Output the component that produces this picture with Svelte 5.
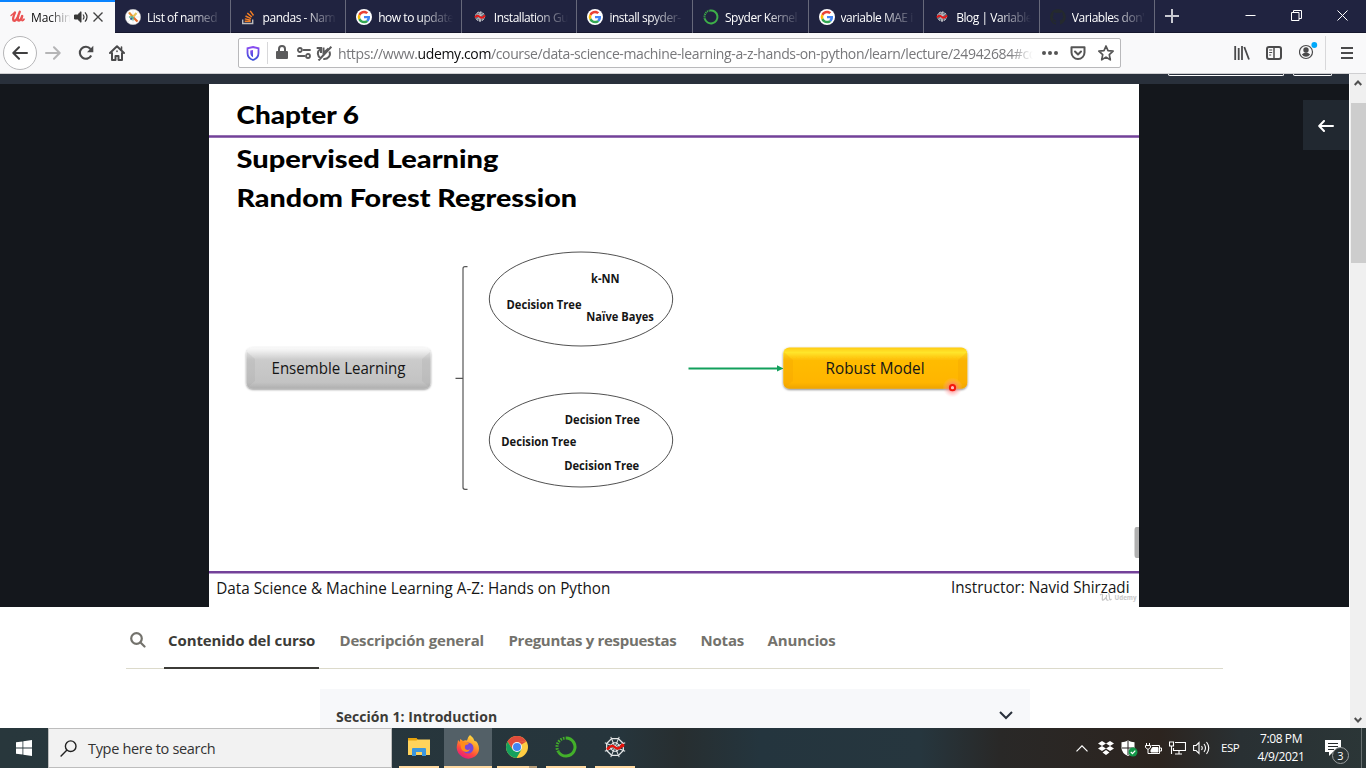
<script>
  const tabs = [
    { icon: 'wheel', text: 'List of named' },
    { icon: 'stack', text: 'pandas - Nam' },
    { icon: 'google', text: 'how to update' },
    { icon: 'spyder', text: 'Installation Gu' },
    { icon: 'google', text: 'install spyder-' },
    { icon: 'anaconda', text: 'Spyder Kernel' },
    { icon: 'google', text: 'variable MAE i' },
    { icon: 'spyder', text: 'Blog | Variable' },
    { icon: 'github', text: "Variables don'" }
  ];
  const labels = [
    { t: 'k-NN', x: 591, y: 283, w: 28.5 },
    { t: 'Decision Tree', x: 506.5, y: 309, w: 75 },
    { t: 'Naïve Bayes', x: 586.3, y: 321, w: 67.5 },
    { t: 'Decision Tree', x: 564.8, y: 424, w: 75 },
    { t: 'Decision Tree', x: 501.3, y: 446, w: 75 },
    { t: 'Decision Tree', x: 564.2, y: 470, w: 75 }
  ];
  const spokes = [0, 45, 90, 135, 180, 225, 270, 315];
</script>

{#snippet google()}
  <svg width="16" height="16" viewBox="0 0 48 48">
    <circle cx="24" cy="24" r="24" fill="#fff" />
    <g transform="translate(5 5) scale(.79)">
      <path fill="#ea4335" d="M24 9.500c3.500 0 6.700 1.200 9.200 3.600l6.900-6.900C35.900 2.400 30.500 0 24 0 14.600 0 6.500 5.400 2.600 13.200l8 6.200C12.400 13.700 17.700 9.500 24 9.500z" />
      <path fill="#4285f4" d="M47 24.500c0-1.600-.2-3.100-.4-4.500H24v9h12.900c-.6 3-2.300 5.500-4.800 7.200l7.700 6C44.400 38 47 31.900 47 24.500z" />
      <path fill="#fbbc05" d="M10.500 28.600A14.500 14.500 0 0 1 10.500 19.400l-8-6.200a24 24 0 0 0 0 21.600z" />
      <path fill="#34a853" d="M24 48c6.500 0 11.900-2.100 15.900-5.800l-7.700-6c-2.200 1.500-4.900 2.300-8.200 2.300-6.300 0-11.600-4.200-13.500-9.900l-8 6.200C6.500 42.600 14.600 48 24 48z" />
    </g>
  </svg>
{/snippet}

{#snippet web(size)}
  <svg width={size} height={size} viewBox="0 0 24 24" fill="none">
    <g stroke="#e4e6e7" stroke-width="1" transform="rotate(22.500 12 12)">
      {#each spokes as a}
        <path d="M12 12V1" transform="rotate({a} 12 12)" />
      {/each}
      <path d="M12 3l6.400 2.600L21 12l-2.600 6.400L12 21l-6.400-2.600L3 12l2.600-6.400z" stroke-width="1.300" />
      <path d="M12 7.500l3.200 1.300 1.300 3.200-1.300 3.200-3.200 1.300-3.200-1.300L7.500 12l1.300-3.200z" />
    </g>
    <path d="M5 13.500c2-2.600 4-3.500 6.500-1.500s4.500 2.500 7.500-1.500" stroke="#e3120b" stroke-width="2.300" />
    <circle cx="5" cy="13.500" r="1.500" fill="#e3120b" /><circle cx="19.500" cy="10.500" r="1.900" fill="#e3120b" />
  </svg>
{/snippet}

{#snippet tabIcon(name)}
  {#if name === 'google'}
    {@render google()}
  {:else if name === 'wheel'}
    <svg width="16" height="16" viewBox="0 0 16 16" fill="none">
      <circle cx="8" cy="8" r="7.700" fill="#fff" stroke="#bbb" stroke-width=".5" />
      <path d="M8 1v14M1 8h14M3 3l10 10M3 13L13 3" stroke="#d5d9dc" stroke-width=".5" />
      <path d="M8 8L4 3.500" stroke="#e99030" stroke-width="2.200" />
      <path d="M8 8l4.500 4.500" stroke="#e56b2c" stroke-width="2.200" />
      <path d="M8 8l3.500-4" stroke="#e8c35a" stroke-width="2.200" />
      <path d="M8 8l-2.500 2.500" stroke="#355f9b" stroke-width="2" />
      <path d="M8 8H4M8 8v3.500" stroke="#63b894" stroke-width="1.400" />
    </svg>
  {:else if name === 'stack'}
    <svg width="16" height="16" viewBox="0 0 16 16" fill="none" stroke-width="1.400">
      <path d="M1.700 10.500v4h10v-4" stroke="#bcbbbb" />
      <path d="M3.700 12.300h6M3.800 9.900l5.900 1.200M4.500 7l5.500 2.600M6.300 4.100l4.500 3.900M9.200 1.800l3.300 4.700" stroke="#f47f24" />
    </svg>
  {:else if name === 'spyder'}
    <svg width="16" height="16" viewBox="0 0 16 16" fill="none">
      <circle cx="8" cy="7.500" r="4.600" fill="#696e7b" stroke="#c9cbd1" stroke-dasharray="2 1" />
      <path d="M8 3v9.500M5 4.500l6 6M11 4.500l-6 6" stroke="#dfe0e3" />
      <path d="M3 8.500c2-2.800 3.500-1.700 5-.5s3 1 5-1.600" stroke="#e51616" stroke-width="2" />
    </svg>
  {:else if name === 'anaconda'}
    <svg width="16" height="16" viewBox="0 0 16 16" fill="none" stroke="#3eb049">
      <path d="M7 1.500a6.500 6.500 0 1 1-5.300 8.100" stroke-width="2" />
      <path d="M1.700 9.600A6.500 6.500 0 0 1 7 1.500" stroke-width="2" stroke-dasharray="1.100 .8" />
    </svg>
  {:else}
    <svg width="16" height="16" viewBox="0 0 16 16">
      <path fill="#24292e" d="M8 0C3.600 0 0 3.600 0 8c0 3.500 2.300 6.500 5.500 7.600.4.100.5-.2.500-.4v-1.400c-2.200.5-2.700-1-2.700-1-.4-.9-.9-1.200-.9-1.200-.7-.5.100-.5.100-.5.800.1 1.200.8 1.200.8.700 1.300 1.900.9 2.300.7.100-.5.300-.9.500-1.100-1.800-.2-3.600-.9-3.600-4 0-.9.300-1.600.8-2.100-.1-.2-.4-1 .1-2.100 0 0 .7-.2 2.200.8a7.600 7.600 0 0 1 4 0c1.500-1 2.200-.8 2.200-.8.500 1.100.2 1.900.1 2.100.5.500.8 1.200.8 2.100 0 3.100-1.900 3.700-3.600 3.900.3.300.5.800.5 1.500v2.200c0 .2.100.5.600.4A8 8 0 0 0 8 0z" />
    </svg>
  {/if}
{/snippet}

<div class="screen">
  <header class="tabs">
    <div class="tab active">
      <svg width="15" height="16" viewBox="0 0 15 16" fill="none" stroke="#ea5252" stroke-linecap="round" stroke-linejoin="round">
        <path d="M1 6.500L4 4" stroke-width="1.300" />
        <path d="M5 3.500Q2.300 9.800 3.500 11.500q2.200 1.200 4.600-4" stroke-width="2.300" />
        <path d="M9.800 2.800Q6.800 9.500 8.300 11.500q2 .7 3.900-4.500" stroke-width="2.300" />
        <path d="M12.300 7Q11.200 10.800 12 11.500q1 .3 2-1.300" stroke-width="1.700" />
      </svg>
      <span class="title">Machin</span>
      <svg class="speaker" width="14" height="12" viewBox="0 0 14 12" fill="none" stroke="#383838">
        <path d="M.5 4h3L7 .7v10.600L3.500 8h-3z" fill="#383838" />
        <path d="M9 3.500q2 2.500 0 5M11 1.300q4 4.700 0 9.400" stroke-width="1.200" />
      </svg>
      <svg width="10" height="10" viewBox="0 0 10 10" stroke="#444" stroke-width="1.400"><path d="M.5.5l9 9M9.500.5l-9 9" /></svg>
    </div>
    {#each tabs as tab}
      <div class="tab">
        {@render tabIcon(tab.icon)}
        <span class="title">{tab.text}</span>
      </div>
    {/each}
    <svg class="plus" width="14" height="14" viewBox="0 0 14 14" stroke="#c9cad2" stroke-width="2"><path d="M7 0v14M0 7h14" /></svg>
    <div class="window">
      <svg width="11" height="11" viewBox="0 0 11 11" stroke="#fff"><path d="M.5 5.500h10" /></svg>
      <svg width="11" height="11" viewBox="0 0 11 11" fill="none" stroke="#fff"><path d="M.5 2.500h7.500v8H.5zM2.500 2.500v-2h8v8H8" /></svg>
      <svg width="11" height="11" viewBox="0 0 11 11" stroke="#fff"><path d="M.5.5l10 10M10.500.5l-10 10" /></svg>
    </div>
  </header>

  <nav class="toolbar">
    <div class="back">
      <svg width="16" height="14" viewBox="0 0 16 14" fill="none" stroke="#3f3f40" stroke-width="2" stroke-linecap="round" stroke-linejoin="round"><path d="M15 7H1.500M7 1.300L1.300 7 7 12.700" /></svg>
    </div>
    <svg class="fwd" width="16" height="14" viewBox="0 0 16 14" fill="none" stroke="#b5b5b6" stroke-width="2" stroke-linecap="round" stroke-linejoin="round"><path d="M1 7h13.500M9 1.300L14.700 7 9 12.700" /></svg>
    <svg class="reload" width="16" height="16" viewBox="0 0 16 16" fill="none" stroke="#4a4a4b" stroke-width="2.100">
      <path d="M13.200 10.500A6 6 0 1 1 12.500 4" /><path d="M15.300.8v6.400H9z" fill="#4a4a4b" stroke="none" />
    </svg>
    <svg width="16" height="16" viewBox="0 0 16 16" fill="none" stroke="#4a4a4b" stroke-width="2" stroke-linejoin="round" stroke-linecap="round">
      <path d="M1 8l7-6.800L15 8M3 8v7h3.500v-4h3v4H13V8" /><path d="M12.500 2v2.500M8 6v.5" stroke-width="1.600" />
    </svg>
    <div class="url">
      <svg width="14" height="15" viewBox="0 0 14 15" fill="none">
        <defs><linearGradient id="shield" x2="0" y2="1"><stop stop-color="#8a4df0" /><stop offset="1" stop-color="#3a50d8" /></linearGradient></defs>
        <path d="M7 1l5.500 1.300V7c0 3.500-2 5.800-5.500 7-3.500-1.200-5.500-3.500-5.500-7V2.300z" stroke="url(#shield)" stroke-width="1.800" />
        <path d="M7 4l-2.700.5V7c0 2 1 3.300 2.700 4.200z" fill="url(#shield)" />
      </svg>
      <i class="sep"></i>
      <svg class="lock" width="12" height="14" viewBox="0 0 12 14"><rect y="6" width="12" height="8" rx="1" fill="#5b5b5c" /><path d="M3 7V4a3 3 0 0 1 6 0v3" fill="none" stroke="#5b5b5c" stroke-width="2" /></svg>
      <svg class="perm" width="14" height="12" viewBox="0 0 14 12" fill="none" stroke="#5b5b5c" stroke-width="1.800"><circle cx="2.900" cy="3" r="2" /><path d="M6.500 3H13M1 9h6.500" stroke-linecap="round" /><circle cx="11" cy="9" r="2" /></svg>
      <svg width="16" height="15" viewBox="0 0 16 15" fill="none" stroke="#5b5b5c" stroke-width="2">
        <path d="M.7 2h4.300v5M4.500 3C.8 5.500 1 10 5 12.800M7.500 1.500v5.500l5-4.500M13.300 5.500c2 3.800-1.300 8-6 7.500M2.500 14.500L15.300.7" />
      </svg>
      <span class="address">https://www.<b>udemy.com</b>/course/data-science-machine-learning-a-z-hands-on-python/learn/lecture/24942684#co</span>
      <svg class="dots" width="16" height="4" viewBox="0 0 16 4" fill="#555"><circle cx="2" cy="2" r="2" /><circle cx="8" cy="2" r="2" /><circle cx="14" cy="2" r="2" /></svg>
      <svg width="16" height="15" viewBox="0 0 16 15" fill="none" stroke="#555" stroke-width="2" stroke-linecap="round" stroke-linejoin="round"><path d="M1.500 1.200h13V6.500a6.500 6.500 0 0 1-13 0zM5 5.500l3 3 3-3" /></svg>
      <svg width="16" height="16" viewBox="0 0 16 16" fill="none" stroke="#555" stroke-width="1.700" stroke-linejoin="round"><path d="M8 1l2 4.600 5.100.5-3.800 3.500 1 5.200L8 12.100l-4.300 2.700 1-5.200L.9 6.100 6 5.600z" /></svg>
    </div>
    <div class="tools">
      <svg width="16" height="14" viewBox="0 0 16 14" fill="none" stroke="#4a4a4b" stroke-width="1.800"><path d="M1.200 0v14M4.700 2v12M8 0v14M10.300 1l4.700 12.500" /></svg>
      <svg width="16" height="14" viewBox="0 0 16 14" fill="none" stroke="#4a4a4b"><rect x="1" y="1" width="14" height="12" rx="2" stroke-width="2" /><path d="M8 1v12" stroke-width="1.500" /><path d="M3.200 4h3M3.200 6.500h3M3.200 9h2" /></svg>
      <svg class="account" width="19" height="20" viewBox="0 0 19 20" fill="none"><circle cx="7" cy="12" r="6.500" stroke="#4a4a4b" stroke-width="1.200" /><circle cx="7" cy="10" r="2.700" fill="#4a4a4b" /><path d="M2.800 14.500q4.200-4 8.400 0-1.800 2.200-4.200 2.200t-4.200-2.200" fill="#4a4a4b" /><circle cx="15.500" cy="5" r="3.500" fill="#f9f9fa" /><circle cx="15.300" cy="5" r="2.900" fill="#00a8fa" /></svg>
      <i class="sep tall"></i>
      <svg width="12" height="12" viewBox="0 0 12 12" stroke="#4a4a4b" stroke-width="2"><path d="M0 1h12M0 6h12M0 11h12" /></svg>
    </div>
  </nav>

  <main class="body">
    <div class="page">
      <div class="coursebar"><i class="pill long"></i><i class="pill short"></i></div>
      <section class="video">
        <svg class="slide" width="930" height="523" viewBox="209 84 930 523">
          <defs>
            <linearGradient id="grey" x2="0" y2="1"><stop stop-color="#fafafa" /><stop offset=".08" stop-color="#f0f0f0" /><stop offset=".3" stop-color="#cbcbcb" /><stop offset=".85" stop-color="#c3c3c3" /><stop offset="1" stop-color="#b0b0b0" /></linearGradient>
            <linearGradient id="gold" x2="0" y2="1"><stop stop-color="#ffcb12" /><stop offset=".12" stop-color="#ffe52b" /><stop offset=".3" stop-color="#ffbc06" /><stop offset=".85" stop-color="#ffb500" /><stop offset="1" stop-color="#eea400" /></linearGradient>
            <radialGradient id="glow"><stop offset=".2" stop-color="#f66" stop-opacity=".8" /><stop offset="1" stop-color="#fbb" stop-opacity="0" /></radialGradient>
            <filter id="drop" x="-5%" y="-15%" width="110%" height="140%"><feDropShadow dx="0" dy="1" stdDeviation="1.200" flood-opacity=".5" /></filter>
          </defs>
          <rect x="209" y="84" width="930" height="523" fill="#fff" />
          <path d="M209 136.500h930M209 572.300h930" stroke="#734199" stroke-width="2.400" />
          <g class="heading">
            <text x="236.500" y="123.500" textLength="122.500" lengthAdjust="spacingAndGlyphs">Chapter 6</text>
            <text x="236.500" y="167.600" textLength="262" lengthAdjust="spacingAndGlyphs">Supervised Learning</text>
            <text x="236.500" y="206.600" textLength="340.500" lengthAdjust="spacingAndGlyphs">Random Forest Regression</text>
          </g>
          <rect x="246.500" y="347.500" width="184" height="41" rx="6" fill="url(#grey)" filter="url(#drop)" />
          <path d="M247 352l8 7v22l-7 6q-1-1-1-4zM430 352l-8 7v22l7 6q1-1 1-4z" fill="#999" opacity=".18" />
          <text class="box" x="271.500" y="373.700" textLength="134" lengthAdjust="spacingAndGlyphs">Ensemble Learning</text>
          <path d="M467.500 266.700h-2.500q-2 0-2 2v218.600q0 2 2 2h2.500M455.500 378.300h7.500" fill="none" stroke="#565656" stroke-width="1.200" />
          <g fill="none" stroke="#515151" stroke-width="1"><ellipse cx="581" cy="299" rx="91.700" ry="47" /><ellipse cx="581" cy="440" rx="91.700" ry="47" /></g>
          {#each labels as l}
            <text class="label" x={l.x} y={l.y} textLength={l.w} lengthAdjust="spacingAndGlyphs">{l.t}</text>
          {/each}
          <path d="M688.500 368.400H779" stroke="#12a05c" stroke-width="2" /><path d="M777 365.200l6.500 3.200-6.500 3.200z" fill="#12a05c" />
          <rect x="783.300" y="347.500" width="184" height="41.300" rx="6" fill="url(#gold)" filter="url(#drop)" />
          <path d="M784 352l9 8v21l-8 6q-1-1-1-4zM967 352l-9 8v21l8 6q1-1 1-4z" fill="#e99800" opacity=".2" />
          <text class="box" x="825.500" y="374.300" textLength="99" lengthAdjust="spacingAndGlyphs">Robust Model</text>
          <circle cx="952.500" cy="387.500" r="10" fill="url(#glow)" /><circle cx="952.500" cy="387.700" r="2.600" fill="#fbb" stroke="#f3160c" stroke-width="2" />
          <path d="M1139 527h-2.500q-2 0-2 3v25q0 3 2 3h2.500z" fill="#b0b0b0" />
          <text class="foot" x="216.300" y="594" textLength="394" lengthAdjust="spacingAndGlyphs">Data Science &amp; Machine Learning A-Z: Hands on Python</text>
          <text class="foot" x="951" y="592.700" textLength="178.500" lengthAdjust="spacingAndGlyphs">Instructor: Navid Shirzadi</text>
          <path d="M1100 595q3-2 2.500 1t0 4 4-3v-2m0 3q0 3 2 2m0-7q1 2 1 5t2 1" fill="none" stroke="#c4c4c4" stroke-width="1.200" />
          <text class="mark" x="1114.500" y="599.500" textLength="22" lengthAdjust="spacingAndGlyphs">Udemy</text>
        </svg>
        <button class="drawer" aria-label="Abrir contenido">
          <svg width="16" height="12" viewBox="0 0 16 12" fill="none" stroke="#fff" stroke-width="2" stroke-linecap="round" stroke-linejoin="round"><path d="M15 6H1.500M6 1L1.200 6 6 11" /></svg>
        </button>
      </section>
      <div class="menu">
        <svg class="find" width="16" height="16" viewBox="0 0 16 16" fill="none" stroke="#73726c" stroke-width="2.200" stroke-linecap="round"><circle cx="6.500" cy="6.500" r="5.300" /><path d="M10.500 10.500l4 4" /></svg>
        <span class="item on">Contenido del curso</span>
        <span class="item i2">Descripción general</span>
        <span class="item i3">Preguntas y respuestas</span>
        <span class="item i4">Notas</span>
        <span class="item i5">Anuncios</span>
      </div>
      <div class="section">
        <span>Sección 1: Introduction</span>
        <svg width="14" height="9" viewBox="0 0 14 9" fill="none" stroke="#29303b" stroke-width="2"><path d="M1 1l6 6 6-6" /></svg>
      </div>
    </div>
    <aside class="scroll">
      <svg width="8" height="6" viewBox="0 0 8 6" fill="none" stroke="#505050" stroke-width="2"><path d="M.7 5L4 1.500 7.300 5" /></svg>
      <i class="thumb"></i>
      <svg class="down" width="8" height="6" viewBox="0 0 8 6" fill="none" stroke="#505050" stroke-width="2"><path d="M.7 1L4 4.500 7.300 1" /></svg>
    </aside>
  </main>

  <footer class="taskbar">
    <div class="start"><svg width="16" height="16" viewBox="0 0 16 16" fill="#fff"><path d="M0 2.300L6.500 1.400v6.100H0zM7.300 1.300L16 0v7.500H7.300zM0 8.400h6.500v6.200L0 13.700zM7.300 8.400H16V16l-8.700-1.300z" /></svg></div>
    <div class="search">
      <svg width="17" height="17" viewBox="0 0 17 17" fill="none" stroke="#222" stroke-width="1.400"><circle cx="10.700" cy="6.200" r="5.300" /><path d="M7 10L.6 16.400" /></svg>
      <span>Type here to search</span>
    </div>
    <div class="apps">
      <div class="app">
        <svg width="22" height="20" viewBox="0 0 22 20"><path d="M0 1h8l2 2H0z" fill="#e59c00" /><path d="M0 2.500h22V18H0z" fill="#ffd35c" /><path d="M0 3.500V1h8.500l1 1.500-1 1z" fill="#e8a40c" /><path d="M4 19v-7q0-1 1-1h12q1 0 1 1v7h-4v-4H8v4z" fill="#3c96dc" /></svg>
      </div>
      <div class="app current">
        <svg width="24" height="24" viewBox="0 0 24 24">
          <defs><linearGradient id="fox" x1=".8" y1="0" x2=".3" y2="1"><stop stop-color="#ffe84a" /><stop offset=".4" stop-color="#ff9a27" /><stop offset=".7" stop-color="#ff4a3d" /><stop offset="1" stop-color="#e31587" /></linearGradient></defs>
          <path d="M14 0q4 3 4.500 6 2-.2 3 2 4 8-2.500 13.500-6 4-12.500.5Q-1.500 17 1.500 8L2 5l2 2V4q2 1 3 2 2-1 4-.5Q11.500 2 14 0z" fill="url(#fox)" />
          <circle cx="12" cy="13" r="5.500" fill="#7848d8" />
          <path d="M4 6q3 0 4 1l5 1q-.5 2-3.500 2-1.500 3 .5 4.500 2 1 4-.5-1 3-4 3-4-.5-5-4Q4.500 9 4 6z" fill="#ff8c1a" />
        </svg>
      </div>
      <div class="app chrome">
        <svg width="22" height="22" viewBox="0 0 22 22"><circle cx="11" cy="11" r="11" fill="#ffcd42" /><path d="M1.500 5.500A11 11 0 0 1 20.500 5.500L11 6 6.700 13.500z" fill="#e04b3c" /><path d="M20.500 5.500H11v1l-4 7z" fill="#e04b3c" /><path d="M1.500 5.500A11 11 0 0 0 10.500 22l5-8.500h-9z" fill="#15a05d" /><circle cx="11" cy="11" r="5" fill="#f3f3f3" /><circle cx="11" cy="11" r="4" fill="#4285f4" /></svg>
      </div>
      <div class="app">
        <svg width="22" height="22" viewBox="0 0 22 22" fill="none" stroke="#43b02a"><path d="M11 2a9 9 0 1 1-7.500 14" stroke-width="3" /><path d="M3.500 16A9 9 0 0 1 11 2" stroke-width="3" stroke-dasharray="1.500 1.200" /></svg>
      </div>
      <div class="app">{@render web(24)}</div>
    </div>
    <div class="tray">
      <svg width="12" height="7" viewBox="0 0 12 7" fill="none" stroke="#fff" stroke-width="1.200"><path d="M.5 6.300L6 .8l5.500 5.500" /></svg>
      <svg class="dropbox" width="16" height="14" viewBox="0 0 16 14" fill="#fff"><path d="M4 0l4 2.500L4 5 0 2.500zM12 0l4 2.500L12 5 8 2.500zM4 5l4 2.500L4 10 0 7.500zM12 5l4 2.500-4 2.500-4-2.500zM8 9l3.500 2.500L8 14l-3.500-2.500z" /></svg>
      <svg width="17" height="17" viewBox="0 0 17 17"><path d="M7 .5q3 1.700 6.500 1.700V8q0 5-6.500 8Q.5 13 .5 8V2.200Q4 2.200 7 .5z" fill="#fff" /><path d="M7 1v14M1 8h12" stroke="#25211e" /><circle cx="12" cy="12" r="4.500" fill="#129647" /><path d="M9.800 12l1.700 1.600 2.800-3" stroke="#fff" stroke-width="1.200" fill="none" /></svg>
      <svg width="17" height="13" viewBox="0 0 17 13" fill="none" stroke="#fff"><path d="M6.500 3.500h8v8h-10M15 6h1.500v3H15M1.500 1v2M4.500 1v2M.5 3.500h5v2l-2 1.500H2.500L.5 5.500zM3 7v4.500h2" /><path d="M7.500 5.500h5.500V10H6V8z" fill="#fff" /></svg>
      <svg width="17" height="14" viewBox="0 0 17 14" fill="none" stroke="#fff" stroke-width="1.100"><path d="M6 1.500h10.500v8h-12V7M6 13h7M10 9.500V13M.5 1h4v4h-4zM2.500 5v8" /></svg>
      <svg width="17" height="14" viewBox="0 0 17 14" fill="none" stroke="#fff" stroke-width="1.100"><path d="M.6 4.500h2.500L6 1.500v11l-2.900-3H.6zM8.500 5q1.500 2 0 4M11 3q3 4 0 8M13.500 1q4.500 6 0 12" /></svg>
    </div>
    <span class="lang">ESP</span>
    <div class="clock"><span>7:08 PM</span><span>4/9/2021</span></div>
    <div class="notes">
      <svg width="17" height="16" viewBox="0 0 17 16"><path d="M0 0h16v12H8l-4 4v-4H0z" fill="#fff" /><path d="M3 3.500h10M3 6.500h10M3 9.500h6" stroke="#252a2b" stroke-width="1.100" /></svg>
      <span class="count">3</span>
    </div>
    <i class="peek"></i>
  </footer>
</div>

<style>
  :global(body) { margin: 0; overflow: hidden; }
  .screen { width: 1366px; height: 768px; display: flex; flex-direction: column; overflow: hidden; font-family: 'Open Sans', 'Noto Sans', sans-serif; background: #fff; }
  svg { display: block; flex: none; }

  .tabs { height: 33px; flex: none; display: flex; background: #202340; box-shadow: inset 0 -1px #15172d; }
  .tab { width: 115.600px; flex: none; box-sizing: border-box; display: flex; align-items: center; padding: 1px 6px 0 10px; border-right: 1px solid #66687a; color: #fff; }
  .tab.active { width: 115px; background: #f9f9fa; border: 0; border-top: 2px solid #0a84ff; color: #0c0c0d; padding: 0 11px 1px 10px; }
  .title { margin: 2px 0 0 6px; flex: 1; min-width: 0; height: 18px; line-height: 18px; overflow: hidden; white-space: nowrap; font-size: 12px; letter-spacing: -.46px; mask-image: linear-gradient(to right, #000 calc(100% - 36px), transparent calc(100% - 2px)); }
  .tab.active .title { flex: none; width: 40px; margin-top: 1px; letter-spacing: -.1px; mask-image: linear-gradient(to right, #000 18px, transparent); }
  .speaker { margin: 0 5px 0 3px; }
  .plus { margin: 9px 0 0 10px; }
  .window { margin-left: auto; display: flex; gap: 35px; padding: 10px 18px 0 0; }

  .toolbar { height: 41px; flex: none; box-sizing: border-box; display: flex; align-items: center; background: #f9f9fa; border-bottom: 1px solid #cfcfd1; padding-left: 3px; }
  .back { width: 32px; height: 32px; border: 1px solid #b6b6b8; border-radius: 50%; background: #fff; display: grid; place-items: center; }
  .fwd { margin: 0 16.500px 0 8px; }
  .reload { margin-right: 15.500px; }
  .url { margin-left: 113px; width: 883px; height: 30px; box-sizing: border-box; border: 1px solid #b9b9bb; border-radius: 2px; background: #fff; display: flex; align-items: center; padding: 0 6px 0 7px; }
  .sep { width: 1px; height: 22px; background: #d8d8da; margin-left: 7px; }
  .lock { margin: 0 9px 2px 8px; }
  .perm { margin-right: 5px; }
  .address { margin: 2px 0 0 6px; width: 695px; overflow: hidden; white-space: nowrap; font-size: 14px; line-height: 24px; letter-spacing: -.37px; color: #77777a; mask-image: linear-gradient(to right, #000 calc(100% - 24px), transparent); }
  .address b { font-weight: 400; color: #0c0c0d; }
  .dots { margin: 0 12px 0 9px; }
  .dots + svg { margin-right: 12px; }
  .tools { margin-left: auto; display: flex; align-items: center; padding-right: 13px; }
  .tools svg + svg { margin-left: 16px; }
  .tools .account { margin: -7px 0 0 17px; }
  .tall { height: 34px; margin: 0 15px 0 7px; }

  .body { height: 654px; flex: none; display: flex; overflow: hidden; }
  .page { width: 1349px; display: flex; flex-direction: column; }
  .coursebar { height: 10px; flex: none; background: #29303b; display: flex; justify-content: flex-end; gap: 9px; padding-right: 17px; }
  .pill { height: 1px; border: 1px solid #fff; border-top: 0; border-radius: 0 0 2px 2px; }
  .long { width: 114px; }
  .short { width: 37px; }
  .video { height: 523px; flex: none; background: #14171c; display: flex; justify-content: space-between; padding-left: 209px; }
  .drawer { width: 46px; height: 50px; margin-top: 16px; padding: 1px 0 0; border: 0; background: #212830; display: grid; place-items: center; }
  .slide text { fill: #151515; font-family: 'Open Sans', sans-serif; }
  .slide .heading text { font-family: Lato, sans-serif; font-size: 25px; font-weight: 900; fill: #000; }
  .slide .box { font-size: 16px; }
  .slide .label { font-size: 12px; font-weight: 700; }
  .slide .foot { font-size: 15.700px; }
  .slide .mark { font-size: 7px; font-weight: 700; fill: #c8c8c8; }

  .menu { width: 1097px; height: 61px; flex: none; margin-left: 126px; border-bottom: 1px solid #dcdacb; display: flex; box-sizing: content-box; font-size: 15px; font-weight: 700; color: #73726c; }
  .find { margin: 25px 0 0 3.500px; }
  .item { height: 62px; line-height: 67px; box-sizing: border-box; white-space: nowrap; letter-spacing: -.18px; }
  .item.on { width: 155px; margin-left: 18.500px; padding-left: 4px; color: #3c3b37; border-bottom: 2px solid #3c3b37; letter-spacing: -.1px; }
  .i2 { width: 169px; margin-left: 20.500px; }
  .i3 { width: 192px; letter-spacing: -.3px; }
  .i4 { width: 67px; }
  .i5 { letter-spacing: -.1px; }
  .section { width: 710px; height: 39px; box-sizing: border-box; margin: 20px 0 0 320px; padding: 14px 17px 0 16px; background: #f7f8fa; display: flex; justify-content: space-between; color: #3c3b37; font-size: 14px; font-weight: 700; letter-spacing: .04px; line-height: 27px; }
  .section svg { margin-top: 8px; }

  .scroll { width: 17px; box-sizing: border-box; border-left: 1px solid #fff; background: #f0f0f0; display: flex; flex-direction: column; align-items: center; padding: 6px 0 5px; }
  .thumb { width: 15px; height: 160px; margin-top: 17px; background: #cdcdcd; }
  .down { margin-top: auto; }

  .taskbar { height: 40px; flex: none; display: flex; background: linear-gradient(to right, #28373c, #26353c 620px, #272e30 680px, #24353e 760px, #26363e 920px, #292827 1000px, #2c241f 1160px, #293033 1240px, #2b3637); color: #fff; }
  .start { width: 48px; display: grid; place-items: center; }
  .search { width: 344px; box-sizing: border-box; border: 1px solid #bdbdbd; background: #f2f2f2; display: flex; align-items: center; padding-left: 11px; color: #333; font-size: 14.500px; letter-spacing: -.32px; }
  .search span { margin-left: 11px; }
  .apps { display: flex; padding-left: 2.500px; }
  .app { width: 40px; margin: 0 4.500px; height: 38px; border-bottom: 2px solid #ffd9a0; display: grid; place-items: center; }
  .app.current { width: 48px; margin: 0; background: #536067; }
  .app.chrome { margin-left: 5.500px; border-image: linear-gradient(to right, #ffd9a0 31px, #b99f7a 31px) 2; border-width: 0 0 2px; border-style: solid; }
  .tray { margin-left: auto; display: flex; align-items: center; gap: 7px; }
  .dropbox { margin-left: 2.500px; }
  .lang { margin: 11px 0 0 11.500px; width: 20px; font-size: 11.500px; line-height: 17px; letter-spacing: -.5px; }
  .clock { width: 62px; margin-left: 9px; display: flex; flex-direction: column; align-items: center; font-size: 12px; letter-spacing: -.4px; line-height: 18px; padding-top: 2px; margin-right: 13px; }
  .notes { position: relative; width: 36px; padding-top: 12px; }
  .peek { width: 4px; border-left: 1px solid #687071; }
  .count { position: absolute; left: 7px; top: 19px; width: 15px; height: 15px; border: 1px solid #9a9e9f; border-radius: 50%; background: #2b3435; font-size: 11px; line-height: 15px; text-align: center; }
</style>
